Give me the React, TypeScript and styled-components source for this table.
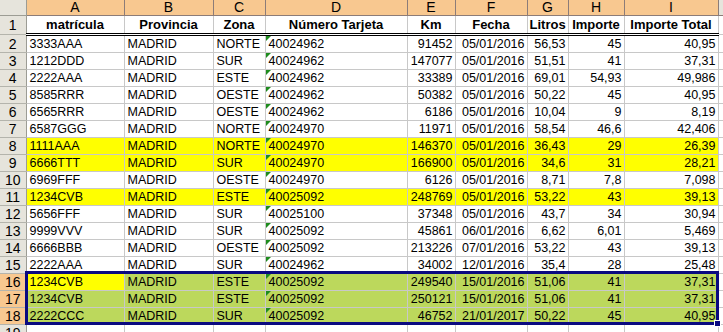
import React from 'react';
import styled, { createGlobalStyle } from 'styled-components';

type Align = 'left' | 'right' | 'center';
type Fill = 'none' | 'yellow' | 'green';

interface Row {
  n: number;
  cells: string[];
  fill: Fill;
  firstFill?: Fill;
}

const HEAD_H = 16;
const TITLE_H = 19;
const ROW_H = 17;
const ROWHEAD_W = 26;

const widths = [98, 89, 52, 142, 48, 72, 41, 56, 94];
const letters = ['A', 'B', 'C', 'D', 'E', 'F', 'G', 'H', 'I'];
const titles = ['matrícula', 'Provincia', 'Zona', 'Número Tarjeta', 'Km', 'Fecha', 'Litros', 'Importe', 'Importe Total'];
const aligns: Align[] = ['left', 'left', 'left', 'left', 'right', 'right', 'right', 'right', 'right'];

const rows: Row[] = [
  { n: 2, cells: ['3333AAA', 'MADRID', 'NORTE', '40024962', '91452', '05/01/2016', '56,53', '45', '40,95'], fill: 'none' },
  { n: 3, cells: ['1212DDD', 'MADRID', 'SUR', '40024962', '147077', '05/01/2016', '51,51', '41', '37,31'], fill: 'none' },
  { n: 4, cells: ['2222AAA', 'MADRID', 'ESTE', '40024962', '33389', '05/01/2016', '69,01', '54,93', '49,986'], fill: 'none' },
  { n: 5, cells: ['8585RRR', 'MADRID', 'OESTE', '40024962', '50382', '05/01/2016', '50,22', '45', '40,95'], fill: 'none' },
  { n: 6, cells: ['6565RRR', 'MADRID', 'OESTE', '40024962', '6186', '05/01/2016', '10,04', '9', '8,19'], fill: 'none' },
  { n: 7, cells: ['6587GGG', 'MADRID', 'NORTE', '40024970', '11971', '05/01/2016', '58,54', '46,6', '42,406'], fill: 'none' },
  { n: 8, cells: ['1111AAA', 'MADRID', 'NORTE', '40024970', '146370', '05/01/2016', '36,43', '29', '26,39'], fill: 'yellow' },
  { n: 9, cells: ['6666TTT', 'MADRID', 'SUR', '40024970', '166900', '05/01/2016', '34,6', '31', '28,21'], fill: 'yellow' },
  { n: 10, cells: ['6969FFF', 'MADRID', 'OESTE', '40024970', '6126', '05/01/2016', '8,71', '7,8', '7,098'], fill: 'none' },
  { n: 11, cells: ['1234CVB', 'MADRID', 'ESTE', '40025092', '248769', '05/01/2016', '53,22', '43', '39,13'], fill: 'yellow' },
  { n: 12, cells: ['5656FFF', 'MADRID', 'SUR', '40025100', '37348', '05/01/2016', '43,7', '34', '30,94'], fill: 'none' },
  { n: 13, cells: ['9999VVV', 'MADRID', 'SUR', '40025092', '45861', '06/01/2016', '6,62', '6,01', '5,469'], fill: 'none' },
  { n: 14, cells: ['6666BBB', 'MADRID', 'OESTE', '40025092', '213226', '07/01/2016', '53,22', '43', '39,13'], fill: 'none' },
  { n: 15, cells: ['2222AAA', 'MADRID', 'SUR', '40024962', '34002', '12/01/2016', '35,4', '28', '25,48'], fill: 'none' },
  { n: 16, cells: ['1234CVB', 'MADRID', 'ESTE', '40025092', '249540', '15/01/2016', '51,06', '41', '37,31'], fill: 'green', firstFill: 'yellow' },
  { n: 17, cells: ['1234CVB', 'MADRID', 'ESTE', '40025092', '250121', '15/01/2016', '51,06', '41', '37,31'], fill: 'green' },
  { n: 18, cells: ['2222CCC', 'MADRID', 'SUR', '40025092', '46752', '21/01/2017', '50,22', '45', '40,95'], fill: 'green' },
];

const selectedRows = [16, 17, 18];

const fillColor = (f: Fill) => (f === 'yellow' ? '#ffff00' : f === 'green' ? '#bcd85c' : '#ffffff');

const GlobalStyle = createGlobalStyle`
  html, body {
    margin: 0;
    padding: 0;
    background: #ffffff;
    overflow: hidden;
  }
`;

const Wrap = styled.div`
  position: relative;
  width: 723px;
  height: 332px;
  overflow: hidden;
  font-family: 'Liberation Sans', Arial, sans-serif;
`;

const Sheet = styled.table`
  border-collapse: collapse;
  table-layout: fixed;
  width: ${ROWHEAD_W + widths.reduce((a, b) => a + b, 0) + 60}px;
`;

const Corner = styled.th`
  height: ${HEAD_H - 1}px;
  padding: 0;
  background: #e6e4dc;
  border-right: 1px solid #9c9c94;
  border-bottom: 1px solid #9c9c94;
`;

const ColHead = styled.th<{ $selected: boolean }>`
  height: ${HEAD_H - 1}px;
  padding: 0;
  font-weight: normal;
  font-size: 14px;
  line-height: ${HEAD_H - 1}px;
  text-align: center;
  color: #000;
  background: ${({ $selected }) => ($selected ? '#f8c890' : '#e6e4dc')};
  border-right: 1px solid #8c7c78;
  border-bottom: 1px solid #8c7c78;
`;

const RowHead = styled.th<{ $selected: boolean; $h: number }>`
  height: ${({ $h }) => $h - 1}px;
  padding: 0;
  font-weight: normal;
  font-size: 14px;
  line-height: ${({ $h }) => $h - 1}px;
  text-align: center;
  vertical-align: middle;
  color: #000;
  background: ${({ $selected }) => ($selected ? '#f8c890' : '#e6e4dc')};
  border-right: 1px solid #9c9c94;
  border-bottom: 1px solid #b4b4ac;
`;

const Title = styled.td`
  height: ${TITLE_H - 3}px;
  padding: 0 2px;
  font-size: 13px;
  font-weight: bold;
  line-height: ${TITLE_H - 3}px;
  text-align: center;
  white-space: nowrap;
  overflow: hidden;
  background: #ffffff;
  border-right: 1px solid #c8c8c8;
  border-bottom: 3px double #000000;
`;

const Cell = styled.td<{ $align: Align; $fill: Fill; $marker?: boolean }>`
  position: relative;
  height: ${ROW_H - 1}px;
  padding: 0 ${({ $align }) => ($align === 'right' ? '2px' : '3px')};
  font-size: 12.5px;
  line-height: ${ROW_H - 1}px;
  text-align: ${({ $align }) => $align};
  white-space: nowrap;
  overflow: hidden;
  color: #000;
  background: ${({ $fill }) => fillColor($fill)};
  border-right: 1px solid #c8c8c8;
  border-bottom: 1px solid #c8c8c8;

  &::before {
    content: '';
    display: ${({ $marker }) => ($marker ? 'block' : 'none')};
    position: absolute;
    left: 0;
    top: 0;
    width: 0;
    height: 0;
    border-top: 5px solid #1e8c1e;
    border-right: 5px solid transparent;
  }
`;

const Selection = styled.div`
  position: absolute;
  box-sizing: border-box;
  border: 3px solid #0a0a80;
  pointer-events: none;
`;

const FillHandle = styled.div`
  position: absolute;
  right: -5px;
  bottom: -5px;
  width: 5px;
  height: 5px;
  background: #0a0a80;
  border: 1px solid #ffffff;
`;

const App: React.FC = () => {
  const firstSel = rows.findIndex(r => r.n === selectedRows[0]);
  const selTop = HEAD_H + TITLE_H + firstSel * ROW_H - 2;
  const selWidth = widths.reduce((a, b) => a + b, 0) + 2;

  return (
    <Wrap>
      <GlobalStyle />
      <Sheet>
        <colgroup>
          <col style={{ width: ROWHEAD_W }} />
          {widths.map((w, i) => (
            <col key={i} style={{ width: w }} />
          ))}
          <col style={{ width: 60 }} />
        </colgroup>
        <thead>
          <tr>
            <Corner />
            {letters.map(l => (
              <ColHead key={l} $selected>
                {l}
              </ColHead>
            ))}
            <ColHead $selected={false} />
          </tr>
        </thead>
        <tbody>
          <tr>
            <RowHead $selected={false} $h={TITLE_H}>1</RowHead>
            {titles.map(t => (
              <Title key={t}>{t}</Title>
            ))}
            <Cell $align="left" $fill="none" />
          </tr>
          {rows.map(r => (
            <tr key={r.n}>
              <RowHead $selected={selectedRows.includes(r.n)} $h={ROW_H}>
                {r.n}
              </RowHead>
              {r.cells.map((c, i) => (
                <Cell
                  key={i}
                  $align={aligns[i]}
                  $fill={i === 0 && r.firstFill ? r.firstFill : r.fill}
                  $marker={i === 3}
                >
                  {c}
                </Cell>
              ))}
              <Cell $align="left" $fill="none" />
            </tr>
          ))}
          <tr>
            <RowHead $selected={false} $h={ROW_H}>19</RowHead>
            {widths.map((_, i) => (
              <Cell key={i} $align="left" $fill="none" />
            ))}
            <Cell $align="left" $fill="none" />
          </tr>
        </tbody>
      </Sheet>
      <Selection
        style={{
          left: ROWHEAD_W - 1,
          top: selTop,
          width: selWidth,
          height: selectedRows.length * ROW_H + 3,
        }}
      >
        <FillHandle />
      </Selection>
    </Wrap>
  );
};

export default App;
